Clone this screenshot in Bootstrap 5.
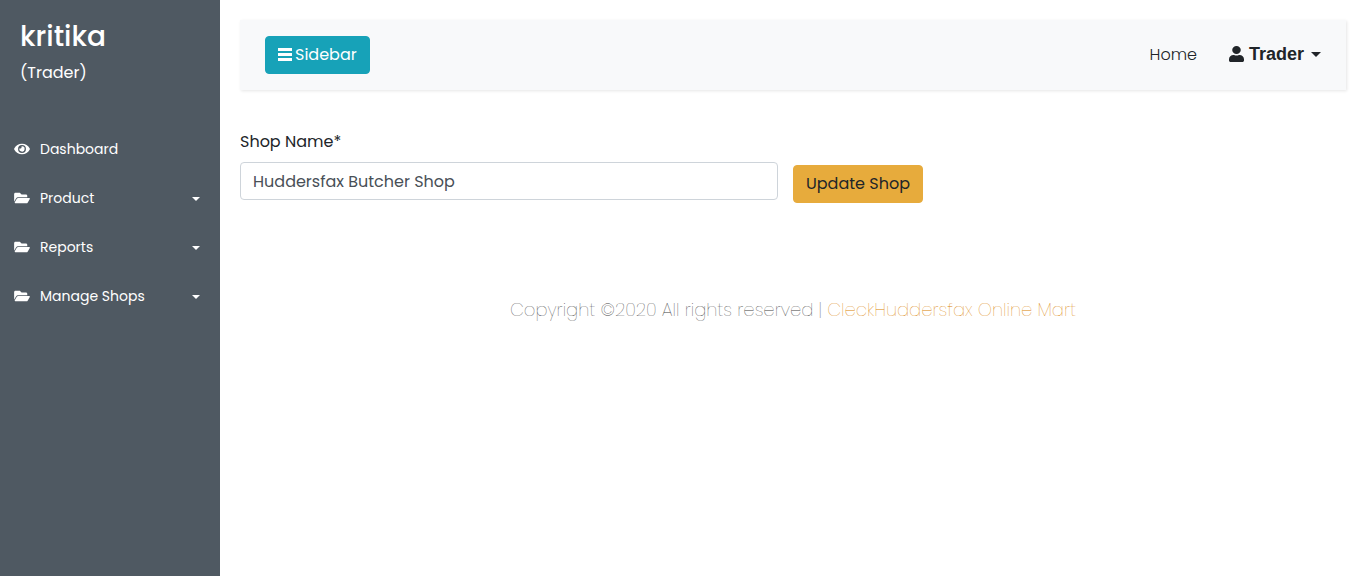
<!DOCTYPE html>
<html lang="en">
<head>
<meta charset="utf-8">
<meta name="viewport" content="width=device-width, initial-scale=1">
<title>Update Shop</title>
<link href="https://cdn.jsdelivr.net/npm/bootstrap@5.3.0/dist/css/bootstrap.min.css" rel="stylesheet">
<style>
body { font-family: Poppins, Inter, sans-serif; font-size: 16px; color: #212529; background: #fff; }
.side-panel { width: 220px; background: #4f5962; color: #fff; }
.side-head { padding: 20px 20px 40px; }
.side-head h1 { font-size: 28px; line-height: 34px; font-weight: 500; margin: 0 0 7px; }
.side-head p { font-size: 16px; line-height: 24px; margin: 0; }
.side-link { display: flex; align-items: center; height: 49px; padding: 0 20px 0 14px; font-size: 14px; color: #fff; text-decoration: none; }
.side-link svg { width: 16px; height: 14px; margin: 0 10px 2px 0; }
.side-link.dropdown-toggle::after { margin-left: auto; }
.main-area { padding: 20px; min-width: 0; }
.top-bar { padding: 16px 10px; margin-bottom: 40px; background: #f8f9fa; box-shadow: 1px 1px 3px rgba(0, 0, 0, .1); }
.top-bar .container-fluid { padding: 0 15px; }
.menu-btn { --bs-btn-bg: #17a2b8; --bs-btn-border-color: #17a2b8; --bs-btn-color: #fff; --bs-btn-hover-bg: #138496; --bs-btn-hover-color: #fff; gap: 3px; font-size: 16px; line-height: 24px; border-radius: 4px; }
.top-link { color: #212529; text-decoration: none; font-weight: 300; font-size: 16px; }
.user-link { font-family: "Liberation Sans", sans-serif; font-weight: 900; font-size: 18px; line-height: 24px; gap: 5px; padding-bottom: 2px; color: #212529; text-decoration: none; }
.user-link.dropdown-toggle::after { margin-left: 2px; border-top-width: 5px; border-right-width: 5px; border-left-width: 5px; }
.shop-form { --bs-gutter-x: 30px; }
.shop-form label { line-height: 24px; }
.shop-form .form-control { font-size: 16px; line-height: 24px; height: 38px; color: #495057; border-color: #ced4da; border-radius: 4px; }
.save-btn { --bs-btn-bg: #e7ab3c; --bs-btn-border-color: #e7ab3c; --bs-btn-color: #212529; --bs-btn-hover-bg: #d79a2b; line-height: 24px; border-radius: 4px; margin-top: 35px; font-size: 16px; }
.site-foot { margin-top: 94px; font-size: 18px; line-height: 26px; font-weight: 200; color: #444; }
.site-foot a { color: #d98200; text-decoration: none; }
</style>
</head>
<body>
<div class="d-flex min-vh-100">
  <nav class="side-panel flex-shrink-0" id="sidePanel" aria-label="Sidebar">
    <div class="side-head">
      <h1>kritika</h1>
      <p>(Trader)</p>
    </div>
    <ul class="list-unstyled m-0">
      <li><a class="side-link" href="#"><svg viewBox="0 0 576 512" fill="currentColor" aria-hidden="true"><path d="M572.5 241.4C518.3 135.600 410.900 64 288 64S57.700 135.600 3.500 241.400a32.400 32.400 0 0 0 0 29.200C57.700 376.400 165.100 448 288 448s230.300-71.600 284.500-177.400a32.400 32.400 0 0 0 0-29.200zM288 400a144 144 0 1 1 144-144 143.900 143.900 0 0 1-144 144zm0-240a95.300 95.300 0 0 0-25.300 3.800 47.900 47.900 0 0 1-66.900 66.900A95.800 95.800 0 1 0 288 160z"/></svg>Dashboard</a></li>
      <li><a class="side-link dropdown-toggle" href="#"><svg viewBox="0 0 576 512" fill="currentColor" aria-hidden="true"><path d="M572.700 292.100L500.300 416.200A64 64 0 0 1 445 448H45c-18.500 0-30.100-20.100-20.700-36.100l72.400-124.100A64 64 0 0 1 152 256h400c18.500 0 30.100 20.100 20.700 36.100zM152 224h328v-48c0-26.500-21.500-48-48-48H272l-64-64H48C21.500 64 0 85.500 0 112v278l69.100-118.400C86.200 242.200 118 224 152 224z"/></svg>Product</a></li>
      <li><a class="side-link dropdown-toggle" href="#"><svg viewBox="0 0 576 512" fill="currentColor" aria-hidden="true"><path d="M572.700 292.100L500.300 416.200A64 64 0 0 1 445 448H45c-18.500 0-30.100-20.100-20.700-36.100l72.400-124.100A64 64 0 0 1 152 256h400c18.500 0 30.100 20.100 20.700 36.100zM152 224h328v-48c0-26.500-21.500-48-48-48H272l-64-64H48C21.500 64 0 85.500 0 112v278l69.100-118.400C86.200 242.200 118 224 152 224z"/></svg>Reports</a></li>
      <li><a class="side-link dropdown-toggle" href="#"><svg viewBox="0 0 576 512" fill="currentColor" aria-hidden="true"><path d="M572.700 292.100L500.300 416.200A64 64 0 0 1 445 448H45c-18.500 0-30.100-20.100-20.700-36.100l72.400-124.100A64 64 0 0 1 152 256h400c18.500 0 30.100 20.100 20.700 36.100zM152 224h328v-48c0-26.500-21.500-48-48-48H272l-64-64H48C21.500 64 0 85.500 0 112v278l69.100-118.400C86.200 242.200 118 224 152 224z"/></svg>Manage Shops</a></li>
    </ul>
  </nav>
  <main class="main-area flex-grow-1">
    <nav class="navbar top-bar" aria-label="Main">
      <div class="container-fluid">
        <button type="button" class="btn menu-btn d-flex align-items-center"><svg width="14" height="14" viewBox="0 0 15 14" preserveAspectRatio="none" fill="currentColor" aria-hidden="true"><path d="M0 0h15v3H0zM0 5h15v3H0zM0 10h15v3H0z"/></svg>Sidebar</button>
        <div class="d-flex align-items-center">
          <a class="top-link me-4 pe-2" href="#">Home</a>
          <a class="user-link dropdown-toggle d-flex align-items-center" href="#"><svg width="15" height="16" viewBox="0 0 448 512" preserveAspectRatio="none" fill="currentColor" aria-hidden="true"><path d="M224 256a128 128 0 1 0 0-256 128 128 0 0 0 0 256zm89.600 32h-16.700a174 174 0 0 1-145.800 0h-16.700C60.200 288 0 348.200 0 422.400V464c0 26.500 21.500 48 48 48h352c26.500 0 48-21.500 48-48v-41.600c0-74.200-60.200-134.400-134.400-134.400z"/></svg>Trader</a>
        </div>
      </div>
    </nav>
    <form class="row shop-form" onsubmit="return false">
      <div class="col-md-6">
        <label for="shopName" class="mb-2">Shop Name*</label>
        <input type="text" class="form-control" id="shopName" value="Huddersfax Butcher Shop">
      </div>
      <div class="col-md-6 ps-0">
        <button type="submit" class="btn save-btn">Update Shop</button>
      </div>
    </form>
    <footer class="site-foot text-center">Copyright ©2020 All rights reserved | <a href="#">CleckHuddersfax Online Mart</a></footer>
  </main>
</div>
<script src="https://cdn.jsdelivr.net/npm/bootstrap@5.3.0/dist/js/bootstrap.bundle.min.js"></script>
</body>
</html>
